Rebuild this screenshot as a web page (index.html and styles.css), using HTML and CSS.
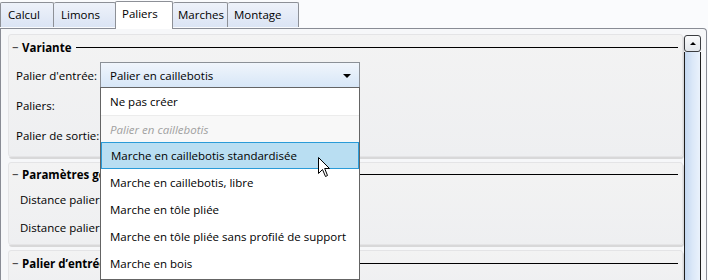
FILE: index.html
```html
<!DOCTYPE html>
<html>
  <head>
    <meta charset="utf-8">
    <title>Paliers</title>
    <link rel="stylesheet" href="styles.css">
  </head>
  <body>
    <div class="window">
      <div class="tabs">
        <div class="tab tab_calcul">Calcul</div>
        <div class="tab tab_limons">Limons</div>
        <div class="tab tab_active">Paliers</div>
        <div class="tab tab_marches">Marches</div>
        <div class="tab tab_montage">Montage</div>
      </div>
      <div class="panel">
        <div class="content">
          <div class="group group_variante">
            <div class="group_head"><span class="toggle">&minus;</span><b>Variante</b><span class="rule"></span></div>
            <div class="row">
              <span class="label">Palier d'entrée:</span>
              <div class="combo">
                <span>Palier en caillebotis</span>
                <span class="combo_arrow"></span>
              </div>
            </div>
            <div class="row"><span class="label">Paliers:</span></div>
            <div class="row"><span class="label">Palier de sortie:</span></div>
          </div>
          <div class="group group_params">
            <div class="group_head"><span class="toggle">&minus;</span><b>Paramètres généraux</b><span class="rule"></span></div>
            <div class="row row_small"><span class="label">Distance palier</span></div>
            <div class="row row_small"><span class="label">Distance palier</span></div>
          </div>
          <div class="group group_entry">
            <div class="group_head"><span class="toggle">&minus;</span><b>Palier d’entrée</b><span class="rule"></span></div>
          </div>
        </div>
        <div class="scrollbar">
          <div class="scroll_up"><span class="scroll_arrow"></span></div>
          <div class="scroll_thumb"></div>
        </div>
      </div>

      <!-- open dropdown of the combo -->
      <ul class="dropdown">
        <li>Ne pas créer</li>
        <li class="item_disabled">Palier en caillebotis</li>
        <li class="item_hover">Marche en caillebotis standardisée</li>
        <li>Marche en caillebotis, libre</li>
        <li>Marche en tôle pliée</li>
        <li>Marche en tôle pliée sans profilé de support</li>
        <li>Marche en bois</li>
      </ul>

      <svg class="cursor" width="13" height="21" viewBox="0 0 13 21">
        <path d="M0.5 0.5 L0.5 16.5 L4.5 12.5 L7.5 19.5 L9.5 18.5 L6.7 11.5 L11.5 11.5 Z" fill="#fff" stroke="#000" stroke-width="1" stroke-linejoin="miter"/>
      </svg>
    </div>
  </body>
</html>
```

FILE: styles.css
```css
html, body {
  margin: 0;
  padding: 0;
}

body {
  font-family: "Open Sans", "Liberation Sans", sans-serif;
  font-size: 11.5px;
  color: #000;
  background-color: #fafbfd;
}

.window {
  position: relative;
  width: 708px;
  height: 280px;
  overflow: hidden;
}

/* tabs */

.tabs {
  display: flex;
  height: 28px;
  align-items: flex-end;
}

.tab {
  box-sizing: border-box;
  height: 25px;
  padding: 4px 0 0 7px;
  margin-bottom: 1px;
  border: 1px solid #8d9097;
  border-bottom: none;
  border-left: none;
  border-radius: 2px 2px 0 0;
  background: linear-gradient(#eef2fa, #dbe4f4);
}

.tab_calcul {
  width: 54px;
  border-left: 1px solid #8d9097;
}

.tab_limons {
  width: 62px;
  padding-left: 7px;
}

.tab_active {
  position: relative;
  z-index: 2;
  height: 28px;
  width: 58px;
  margin: 0 0 -1px -1px;
  padding: 4px 0 0 6px;
  border-left: 1px solid #8d9097;
  background: #fff;
}

.tab_marches {
  width: 55px;
  padding-left: 5px;
}

.tab_montage {
  width: 71px;
  padding-left: 6px;
}

/* panel */

.panel {
  display: flex;
  box-sizing: border-box;
  height: 253px;
  border: 1px solid #898c95;
  border-bottom: none;
  border-top-right-radius: 4px;
  margin-right: 1px;
  background-color: #f6f7f9;
}

.content {
  flex: 1;
  padding: 5px 0 0 7px;
}

.group {
  box-sizing: border-box;
  margin-bottom: 5px;
  border: 1px solid #e4e4e6;
  border-radius: 3px;
  background: linear-gradient(#f3f3f3, #eeeff1);
  box-shadow: 1px 2px 0 #d8d8d9;
}

.group_variante {
  height: 123px;
}

.group_params {
  height: 83px;
}

.group_entry {
  height: 40px;
}

.group_head {
  display: flex;
  align-items: center;
  height: 25px;
  padding: 0 4px 0 3px;
}

.toggle {
  width: 10px;
}

.rule {
  flex: 1;
  height: 0;
  margin-left: 5px;
  border-top: 1px solid #000;
}

.group_params .group_head {
  height: 22px;
}

.group_params .row {
  padding-left: 11px;
}

.row {
  display: flex;
  align-items: center;
  height: 30px;
  padding-left: 7px;
}

.row_small {
  height: 28px;
}

.label {
  width: 84px;
}

.combo {
  display: flex;
  align-items: center;
  justify-content: space-between;
  box-sizing: border-box;
  width: 260px;
  height: 26px;
  padding: 0 8px 0 9px;
  border: 1px solid #8b9097;
  border-bottom: none;
  background: linear-gradient(#f0f5fc, #d6e6f7);
}

.combo_arrow {
  width: 0;
  height: 0;
  border-left: 4px solid transparent;
  border-right: 4px solid transparent;
  border-top: 4px solid #000;
}

/* scrollbar */

.scrollbar {
  width: 17px;
  margin: 6px 5px 0 1px;
}

.scroll_up {
  display: flex;
  align-items: center;
  justify-content: center;
  box-sizing: border-box;
  height: 17px;
  border: 1px solid #3b3d41;
  border-radius: 3px;
  background: linear-gradient(#fafbfc, #e3e7ec);
}

.scroll_arrow {
  width: 0;
  height: 0;
  border-left: 3px solid transparent;
  border-right: 3px solid transparent;
  border-bottom: 3px solid #000;
}

.scroll_thumb {
  box-sizing: border-box;
  height: 240px;
  border-left: 1px solid #1e1e1e;
  border-right: 1px solid #1e1e1e;
  background: linear-gradient(to right, #c4d8f1, #dbe8f8 50%, #eaf2fc);
}

/* dropdown list */

.dropdown {
  position: absolute;
  left: 100px;
  top: 87px;
  box-sizing: border-box;
  width: 260px;
  height: 193px;
  margin: 0;
  padding: 0;
  list-style: none;
  background-color: #fff;
  border: 1px solid #646464;
  z-index: 5;
}

.dropdown li {
  box-sizing: border-box;
  height: 27px;
  line-height: 27px;
  padding-left: 9px;
  white-space: nowrap;
}

.item_disabled {
  color: #a0a0a0;
  font-style: italic;
  background-color: #f8f8f8;
  border-top: 1px solid #ececec;
}

.item_hover {
  background-color: #b9def2;
  border: 1px solid #2a9bd8;
  line-height: 25px !important;
}

.cursor {
  position: absolute;
  left: 318px;
  top: 157px;
  z-index: 6;
}
```
